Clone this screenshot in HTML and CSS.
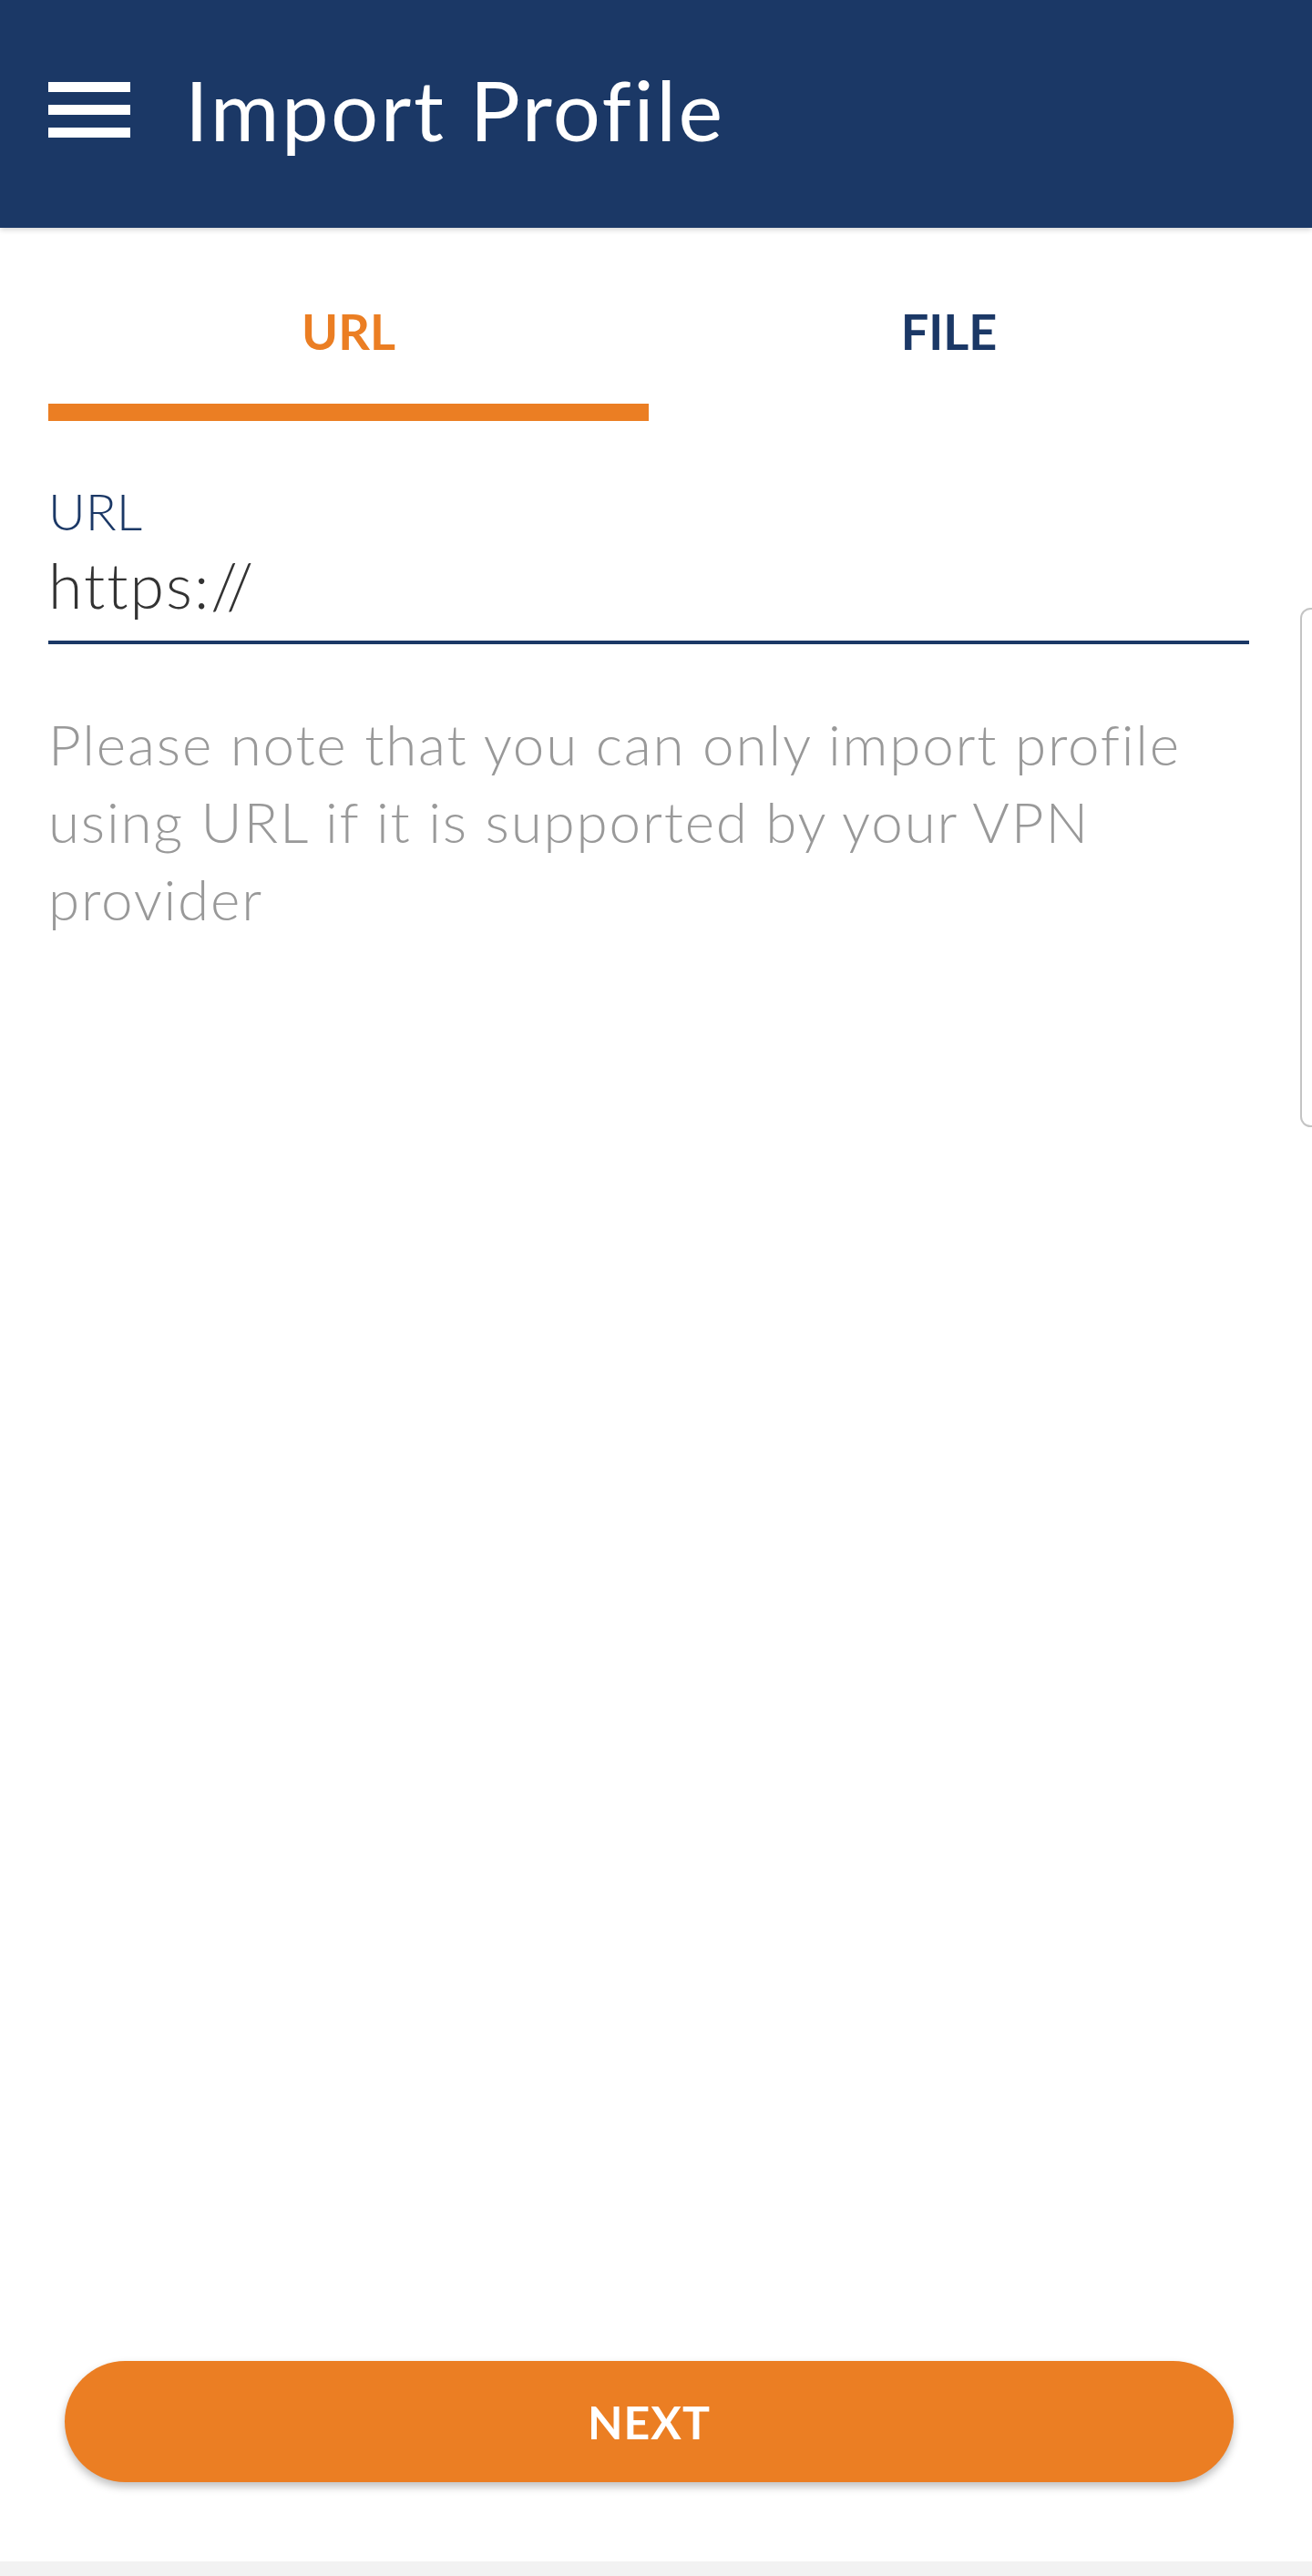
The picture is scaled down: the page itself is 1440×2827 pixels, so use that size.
FILE: index.html
```html
<!DOCTYPE html>
<html>
	<head>
		<meta charset="utf-8">
		<title>Import Profile</title>
		<link rel="stylesheet" href="styles.css">
	</head>
	<body>

	<div class="screen">
		<header class="toolbar">
			<a href="#" class="menu-btn">
				<span></span>
				<span></span>
				<span></span>
			</a>
			<h1 class="toolbar-title">Import Profile</h1>
		</header>

		<section class="content">
			<nav class="tabs">
				<a href="#" class="tab active">
					<span class="tab-label">URL</span>
					<span class="tab-indicator"></span>
				</a>
				<a href="#" class="tab">
					<span class="tab-label">FILE</span>
					<span class="tab-indicator"></span>
				</a>
			</nav>

			<div class="field">
				<label class="field-label" for="url">URL</label>
				<input class="field-input" id="url" type="text" value="https://">
			</div>

			<p class="note">Please note that you can only import profile using URL if it is supported by your VPN provider</p>
		</section>

		<a href="#" class="next-btn">NEXT</a>

		<div class="bottom-bar"></div>

		<!-- edge panel handle -->
		<div class="edge-handle"></div>
	</div>

	</body>
</html>
```

FILE: styles.css
```css
* {
	margin: 0;
	padding: 0;
	box-sizing: border-box;
}
html, body {
	height: 100%;
}
body {
	background: #fff;
	font-family: Lato, "Open Sans", sans-serif;
}
a {
	text-decoration: none;
}
.screen {
	position: relative;
	min-height: 100vh;
	display: flex;
	flex-direction: column;
	overflow: hidden;
}

/* Toolbar */
.toolbar {
	height: 250px;
	background: #1b3866;
	display: flex;
	align-items: center;
	padding: 0 0 10px 53px;
	box-shadow: 0 2px 6px rgba(0, 0, 0, 0.18);
	position: relative;
	z-index: 2;
}
.menu-btn {
	width: 90px;
	height: 61px;
	display: flex;
	flex-direction: column;
	justify-content: space-between;
}
.menu-btn span {
	display: block;
	height: 11px;
	background: #fff;
}
.toolbar-title {
	margin-left: 60px;
	color: #fff;
	font-size: 92px;
	font-weight: 400;
	line-height: 1;
	letter-spacing: 2.6px;
}

/* Content */
.content {
	padding: 0 69px 0 53px;
}
.tabs {
	display: flex;
}
.tab {
	flex: 1;
	height: 212px;
	display: flex;
	flex-direction: column;
	align-items: center;
	padding-top: 87px;
	font-size: 54px;
	font-weight: 700;
	line-height: 54px;
	color: #1b3866;
}
.tab.active {
	color: #eb7e23;
}
.tab-indicator {
	margin-top: auto;
	align-self: stretch;
	height: 19px;
}
.tab.active .tab-indicator {
	background: #eb7e23;
}

.field {
	display: flex;
	flex-direction: column;
	margin-top: 71px;
	border-bottom: 4px solid #1b3866;
	padding-bottom: 21px;
}
.field-label {
	font-size: 56px;
	font-weight: 300;
	line-height: 56px;
	color: #1b3866;
}
.field-input {
	margin-top: 13px;
	border: none;
	outline: none;
	background: transparent;
	font-family: inherit;
	font-size: 68px;
	font-weight: 300;
	line-height: 80px;
	height: 80px;
	letter-spacing: 2px;
	color: #333;
}

.note {
	margin-top: 67px;
	font-size: 62px;
	font-weight: 300;
	line-height: 85px;
	letter-spacing: 1.8px;
	color: #999;
}

/* Bottom */
.next-btn {
	margin: auto 86px 87px 71px;
	height: 133px;
	border-radius: 67px;
	background: #eb7e23;
	box-shadow: 0 5px 10px rgba(0, 0, 0, 0.25);
	display: flex;
	align-items: center;
	justify-content: center;
	color: #fff;
	font-size: 50px;
	font-weight: 700;
	letter-spacing: 1px;
}
.bottom-bar {
	height: 16px;
	background: #f2f2f2;
}

.edge-handle {
	position: absolute;
	top: 667px;
	right: -10px;
	width: 23px;
	height: 570px;
	border: 2px solid #c4c4c4;
	border-radius: 20px;
	background: #fff;
}
```
